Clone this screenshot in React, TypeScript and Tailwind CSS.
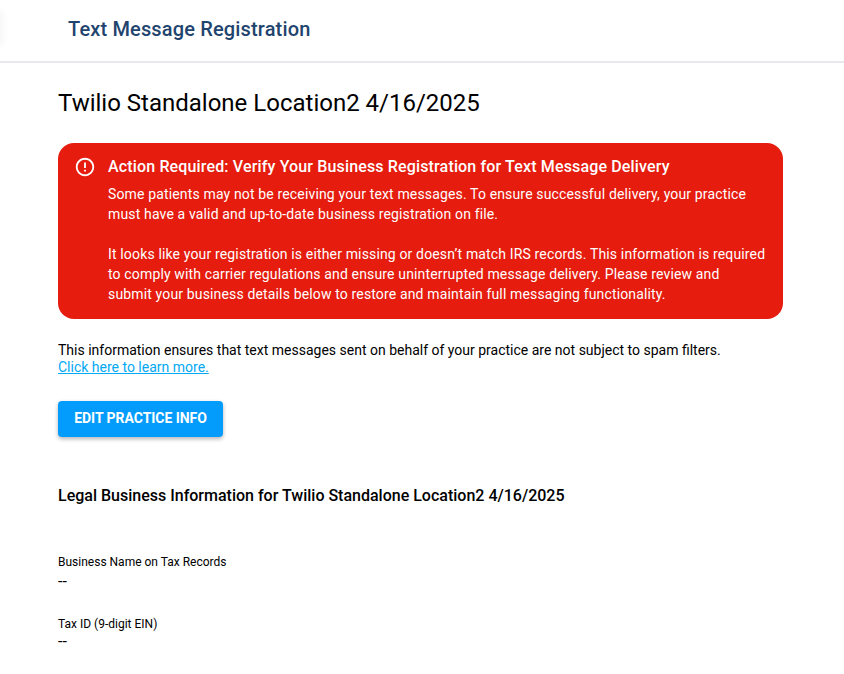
const fieldRows = [
  { label: 'Business Name on Tax Records', value: '--', mt: 'mt-[47px]', gap: 'mt-[2px]' },
  { label: 'Tax ID (9-digit EIN)', value: '--', mt: 'mt-[24px]', gap: 'mt-0' },
]

function AlertIcon() {
  return (
    <svg viewBox="0 0 24 24" className="h-[22px] w-[22px] shrink-0" fill="#ffffff">
      <path d="M11 15h2v2h-2zm0-8h2v6h-2zm.99-5C6.47 2 2 6.48 2 12s4.47 10 9.99 10C17.52 22 22 17.52 22 12S17.52 2 11.99 2zM12 20c-4.42 0-8-3.58-8-8s3.58-8 8-8 8 3.58 8 8-3.58 8-8 8z" />
    </svg>
  )
}

export default function App() {
  return (
    <div className="relative h-[674px] overflow-hidden bg-white font-['Roboto',sans-serif] text-black">
      {/* faint edge of the collapsed side menu */}
      <div className="absolute top-[10px] left-[-4px] h-[36px] w-[8px] rounded-full bg-[#f8f8f8] blur-[2px]" />

      <header className="flex h-[63px] items-center border-b-2 border-[#e8e8ee] pb-[3px] pl-[68px]">
        <h1 className="text-xl font-medium tracking-[0.15px] text-[#1f446e]">Text Message Registration</h1>
      </header>

      <main className="pl-[58px] pr-[61px]">
        <h2 className="mt-[24px] text-[24px] leading-[32px]">Twilio Standalone Location2 4/16/2025</h2>

        <section className="mt-[24px] flex h-[176px] gap-[12px] rounded-[16px] bg-[#e51c0e] pl-[16px] pt-[13px] tracking-[0.15px] text-white">
          <AlertIcon />
          <div>
            <h3 className="text-base leading-[22px] font-medium">Action Required: Verify Your Business Registration for Text Message Delivery</h3>
            <p className="mt-[6px] text-sm leading-[20px]">
              Some patients may not be receiving your text messages. To ensure successful delivery, your practice
              <br />
              must have a valid and up-to-date business registration on file.
            </p>
            <p className="mt-[20px] text-sm leading-[20px]">
              It looks like your registration is either missing or doesn’t match IRS records. This information is required
              <br />
              to comply with carrier regulations and ensure uninterrupted message delivery. Please review and
              <br />
              submit your business details below to restore and maintain full messaging functionality.
            </p>
          </div>
        </section>

        <p className="mt-[23px] text-sm leading-[17px]">
          This information ensures that text messages sent on behalf of your practice are not subject to spam filters.
        </p>
        <a href="#" className="block text-sm leading-[16px] text-[#03a9f4] underline">
          Click here to learn more.
        </a>

        <button className="mt-[26px] block h-[36px] w-[165px] rounded-[4px] bg-[#049cfc] pb-[2px] text-sm font-bold tracking-[-0.05px] text-white shadow-[0_2px_4px_rgba(0,0,0,0.3)]">
          EDIT PRACTICE INFO
        </button>

        <h4 className="mt-[48px] text-base leading-[22px] font-medium">
          Legal Business Information for Twilio Standalone Location2 4/16/2025
        </h4>

        {fieldRows.map((row) => (
          <div key={row.label} className={row.mt}>
            <div className="text-xs leading-[16px]">{row.label}</div>
            <div className={`${row.gap} text-base leading-[20px]`}>{row.value}</div>
          </div>
        ))}
      </main>
    </div>
  )
}
